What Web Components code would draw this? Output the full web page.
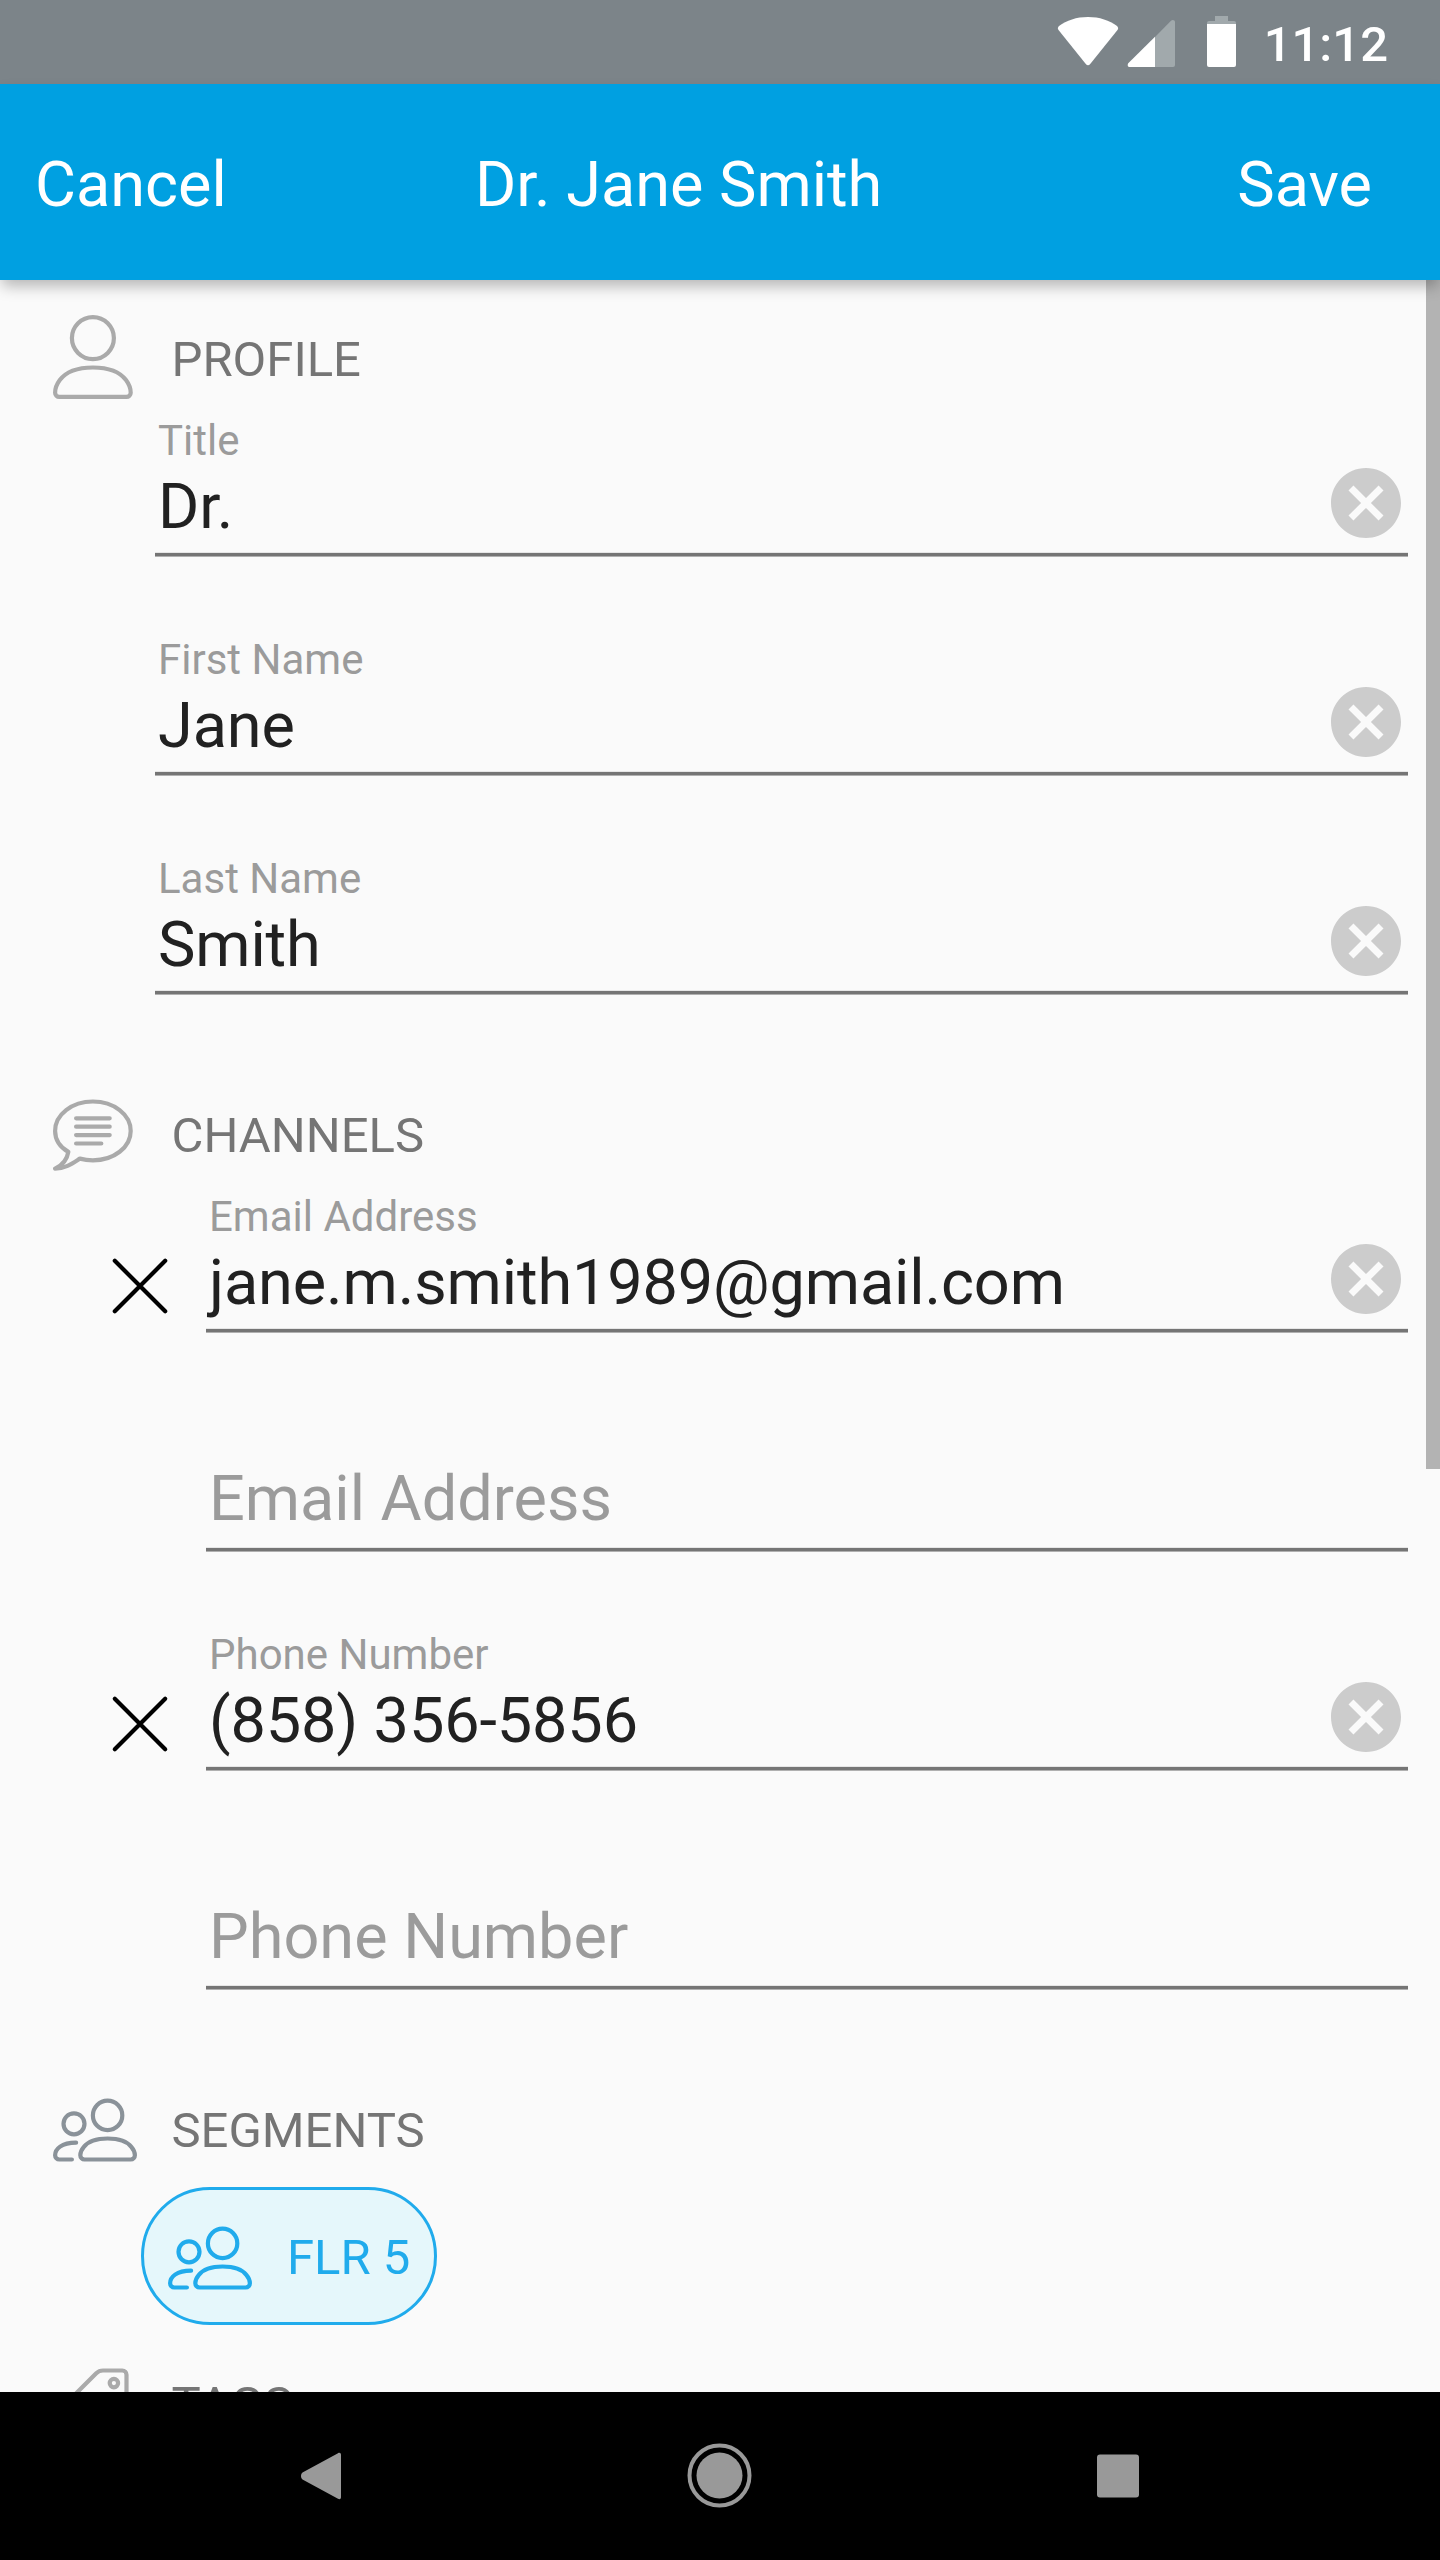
<!DOCTYPE html>
<html lang="en">
<head>
<meta charset="utf-8">
<title>Dr. Jane Smith</title>
<style>
    body{
        margin: 0;
        font-family: Roboto, "Liberation Sans", sans-serif;
        background-color: #fafafa;
    }
</style>
</head>
<body>
<contact-screen>
    <status-bar slot="top" time="11:12"></status-bar>
    <action-bar slot="top">
        <span slot="left">Cancel</span>
        <span slot="title">Dr. Jane Smith</span>
        <span slot="right">Save</span>
    </action-bar>

    <form-section icon="user" heading="PROFILE">
        <form-field label="Title" value="Dr."></form-field>
        <form-field label="First Name" value="Jane"></form-field>
        <form-field label="Last Name" value="Smith"></form-field>
    </form-section>

    <form-section icon="bubble" heading="CHANNELS">
        <form-field channel label="Email Address" value="jane.m.smith1989@gmail.com"></form-field>
        <form-field channel label="Email Address"></form-field>
        <form-field channel label="Phone Number" value="(858) 356-5856"></form-field>
        <form-field channel label="Phone Number"></form-field>
    </form-section>

    <form-section class="segments" icon="users" heading="SEGMENTS">
        <segment-chip>FLR 5</segment-chip>
    </form-section>

    <form-section icon="tag" heading="TAGS"></form-section>

    <nav-bar slot="bottom"></nav-bar>
</contact-screen>

<script>
const ICONS = {
    user: `
        <circle cx="9.5" cy="5.5" r="5"/>
        <path d="M17.5 19.5h-16c-.55 0-1-.45-1-1 0-.05.01-1.5 1.12-3C2.95 13.7 5.65 12.5 9.5 12.5s6.55 1.2 7.88 3c1.11 1.5 1.12 2.95 1.12 3 0 .55-.45 1-1 1z"/>`,
    bubble: `
        <path d="M6.4 16.1c1 .27 2 .4 3.1.4 5 0 9-3.1 9-7s-4-7-9-7-9 3.1-9 7c0 2 1.15 3.8 3.15 5C3.4 16.1 2.4 17.6.5 18.5c2.5 0 4.2-1.3 5.9-2.4z"/>
        <path d="M5.5 6.5h8M5.5 8.5h8M5.5 10.5h8M5.5 12.5h6"/>`,
    users: `
        <circle cx="13" cy="7" r="3.5"/>
        <circle cx="5" cy="9" r="2.5"/>
        <path d="M7.5 17.5c-.55 0-1-.45-1-1 0-.05 0-1 .85-2 1-1.3 2.9-2 5.65-2s4.65.7 5.65 2c.85 1 .85 1.95.85 2 0 .55-.45 1-1 1z"/>
        <path d="M5.5 13.5C2 13.5.5 15 .5 16.5c0 .55.45 1 1 1h3"/>`,
    tag: `
        <path d="M16.5 2.5h-4.6c-.55 0-1.2.25-1.6.65l-9 9c-.4.4-.4 1 0 1.4l5.2 5.2c.4.4 1 .4 1.4 0l9-9c.4-.4.6-1 .6-1.6V3.5c0-.55-.45-1-1-1z"/>
        <circle cx="14.5" cy="5.5" r="1"/>`,
    cross: `<path d="M4 4l12 12M16 4L4 16"/>`
};

class LineIcon extends HTMLElement{

    constructor(){
        super();
        this.attachShadow({mode: 'open'});
    }

    connectedCallback(){
        this.shadowRoot.innerHTML = `
            <style>
                :host{
                    display: block;
                    flex: none;
                    width: 84px;
                    height: 84px;
                }

                svg{
                    display: block;
                    width: 100%;
                    height: 100%;
                    fill: none;
                    stroke: currentColor;
                    stroke-linecap: round;
                    stroke-linejoin: round;
                }
            </style>
            <svg viewBox="0 0 20 20">${ICONS[this.getAttribute('name')]}</svg>
        `;
    }
}

class StatusBar extends HTMLElement{

    constructor(){
        super();
        this.attachShadow({mode: 'open'});
    }

    connectedCallback(){
        this.shadowRoot.innerHTML = `
            <style>
                :host{
                    display: flex;
                    justify-content: flex-end;
                    box-sizing: border-box;
                    height: 84px;
                    padding-right: 52px;
                    background-color: #7c8489;
                    color: #fff;
                }

                svg{
                    width: 190px;
                    height: 84px;
                    margin-right: 21px;
                }

                .time{
                    font-size: 49px;
                    font-weight: 500;
                    line-height: 90px;
                }
            </style>
            <svg viewBox="1053 0 190 84" fill="#fff">
                <path d="M1088 17c11.500 0 21.500 3.400 29 9 1.300 1.200 1.500 2.600.5 4l-27.500 34.300c-1.200 1.300-2.800 1.300-4 0L1058.500 30c-1-1.400-.8-2.800.5-4 7.500-5.600 17.500-9 29-9z"/>
                <path fill="#a1a9ac" d="M1155 37l16-16.300c1.500-1.500 4-.7 4 1.300v43a2 2 0 0 1-2 2h-18z"/>
                <path d="M1155 36.700V67h-25.500c-2 0-2.300-2.500-1-4z"/>
                <path fill="#a1a9ac" d="M1215 16h13v5h6a2 2 0 0 1 2 2v2h-29v-2a2 2 0 0 1 2-2h6z"/>
                <path d="M1207 24h29v41a2 2 0 0 1-2 2h-25a2 2 0 0 1-2-2z"/>
            </svg>
            <span class="time">${this.getAttribute('time')}</span>
        `;
    }
}

class ActionBar extends HTMLElement{

    constructor(){
        super();
        this.attachShadow({mode: 'open'});
        this.render();
    }

    render(){
        this.shadowRoot.innerHTML = `
            <style>
                :host{
                    display: grid;
                    grid-template-columns: 440px 1fr auto;
                    box-sizing: border-box;
                    height: 196px;
                    padding: 0 68px 0 35px;
                    background-color: #00a0e1;
                    box-shadow: 0 8px 14px -2px rgba(0, 0, 0, 0.28);
                    color: #fff;
                    font-size: 63px;
                    line-height: 202px;
                    white-space: nowrap;
                }
            </style>
            <slot name="left"></slot>
            <slot name="title"></slot>
            <slot name="right"></slot>
        `;
    }
}

class FormSection extends HTMLElement{

    constructor(){
        super();
        this.attachShadow({mode: 'open'});
    }

    connectedCallback(){
        const icon = this.getAttribute('icon');

        this.shadowRoot.innerHTML = `
            <style>
                :host{
                    display: block;
                    padding: 35px 32px 0 0;
                }

                header{
                    display: flex;
                    gap: 34.5px;
                    height: 84px;
                    padding-left: 53px;
                }

                line-icon{
                    color: ${icon === 'users' ? '#8a9299' : '#aaa'};
                }

                h2{
                    margin: 0;
                    font-size: 49px;
                    font-weight: 400;
                    line-height: 90px;
                    color: #757575;
                }

                .chips{
                    display: flex;
                    padding: 17px 0 0 141px;
                }
            </style>
            <header>
                <line-icon name="${icon}"></line-icon>
                <h2>${this.getAttribute('heading')}</h2>
            </header>
            ${icon === 'users' ? '<div class="chips"><slot></slot></div>' : '<slot></slot>'}
        `;
    }
}

class FormField extends HTMLElement{

    constructor(){
        super();
        this.attachShadow({mode: 'open'});
    }

    connectedCallback(){
        const label = this.getAttribute('label');
        const value = this.getAttribute('value');

        this.shadowRoot.innerHTML = `
            <style>
                :host{
                    display: flex;
                    box-sizing: border-box;
                    height: 219px;
                    padding-left: 155px;
                }

                :host([channel]){
                    padding-left: 98px;
                }

                .remove{
                    width: 84px;
                    margin: 69px 24px 0 0;
                    color: #000;
                }

                .input{
                    flex: 1;
                    display: flex;
                    height: 158px;
                    box-sizing: border-box;
                    /* the rule has soft upper and lower edges */
                    background: linear-gradient(#e6e6e6 1px, #757575 1px 4px, #b0b0b0 4px) bottom / 100% 5px no-repeat;
                }

                .text{
                    flex: 1;
                    padding: 17px 0 0 3px;
                }

                .label{
                    font-size: 42px;
                    line-height: 50px;
                    color: #9b9b9b;
                }

                .value{
                    margin-top: 4px;
                    font-size: 63px;
                    line-height: 74px;
                    letter-spacing: -0.12px;
                    color: #212121;
                }

                .placeholder{
                    padding-top: 51px;
                    font-size: 63px;
                    line-height: 74px;
                    color: #9b9b9b;
                }

                .clear{
                    width: 84px;
                    height: 84px;
                    margin-top: 62px;
                    fill: #ccc;
                }
            </style>
            ${this.hasAttribute('channel') ? `<div class="remove">${value ? '<line-icon name="cross"></line-icon>' : ''}</div>` : ''}
            <div class="input">
                <div class="text">
                    ${value
                        ? `<div class="label">${label}</div><div class="value">${value}</div>`
                        : `<div class="placeholder">${label}</div>`}
                </div>
                ${value ? `
                <svg class="clear" viewBox="0 0 24 24">
                    <path d="M12 2C6.470 2 2 6.470 2 12s4.470 10 10 10 10-4.470 10-10S17.530 2 12 2zm5 13.590L15.590 17 12 13.410 8.410 17 7 15.590 10.590 12 7 8.410 8.410 7 12 10.590 15.590 7 17 8.410 13.410 12 17 15.590z"/>
                </svg>` : ''}
            </div>
        `;
    }
}

class SegmentChip extends HTMLElement{

    constructor(){
        super();
        this.attachShadow({mode: 'open'});
        this.render();
    }

    render(){
        this.shadowRoot.innerHTML = `
            <style>
                :host{
                    display: flex;
                    align-items: center;
                    gap: 35px;
                    box-sizing: border-box;
                    width: 296px;
                    height: 138px;
                    padding-left: 24px;
                    border: 3px solid #20abec;
                    border-radius: 69px;
                    background-color: #e5f7fb;
                    color: #20abec;
                    font-size: 49px;
                    line-height: 58px;
                    white-space: nowrap;
                }

                span{
                    padding-top: 4px;
                }
            </style>
            <line-icon name="users"></line-icon>
            <span><slot></slot></span>
        `;
    }
}

class NavBar extends HTMLElement{

    constructor(){
        super();
        this.attachShadow({mode: 'open'});
        this.render();
    }

    render(){
        this.shadowRoot.innerHTML = `
            <style>
                :host{
                    display: flex;
                    justify-content: center;
                    align-items: center;
                    gap: 314px;
                    height: 168px;
                    background-color: #000;
                }

                svg{
                    width: 84px;
                    height: 84px;
                    fill: #999;
                }
            </style>
            <svg viewBox="0 0 84 84"><path d="M22.500 38.500L58 19.300c1.500-1 3-.3 3 1.500v42.400c0 1.800-1.500 2.500-3 1.500L22.500 45.500c-2-1.500-2-5.500 0-7z"/></svg>
            <svg viewBox="0 0 84 84"><circle cx="41.500" cy="41.500" r="23"/><circle cx="41.500" cy="41.500" r="30" fill="none" stroke="#999" stroke-width="4"/></svg>
            <svg viewBox="0 0 84 84"><rect x="21" y="20.500" width="42" height="43" rx="3"/></svg>
        `;
    }
}

class ContactScreen extends HTMLElement{

    constructor(){
        super();
        this.attachShadow({mode: 'open'});
        this.render();
    }

    render(){
        this.shadowRoot.innerHTML = `
            <style>
                :host{
                    display: flex;
                    flex-direction: column;
                    width: 1440px;
                    height: 2560px;
                    overflow: hidden;
                    background-color: #fafafa;
                }

                .top{
                    flex: none;
                    position: relative;
                    z-index: 1;
                }

                main{
                    flex: 1;
                    min-height: 0;
                    overflow: hidden;
                    position: relative;
                }

                .scrollbar{
                    position: absolute;
                    top: 0;
                    right: 0;
                    width: 14px;
                    height: 1189px;
                    background-color: #b3b3b3;
                }
            </style>
            <div class="top"><slot name="top"></slot></div>
            <main>
                <slot></slot>
                <div class="scrollbar"></div>
            </main>
            <slot name="bottom"></slot>
        `;
    }
}

customElements.define('line-icon', LineIcon);
customElements.define('status-bar', StatusBar);
customElements.define('action-bar', ActionBar);
customElements.define('form-section', FormSection);
customElements.define('form-field', FormField);
customElements.define('segment-chip', SegmentChip);
customElements.define('nav-bar', NavBar);
customElements.define('contact-screen', ContactScreen);
</script>
</body>
</html>
